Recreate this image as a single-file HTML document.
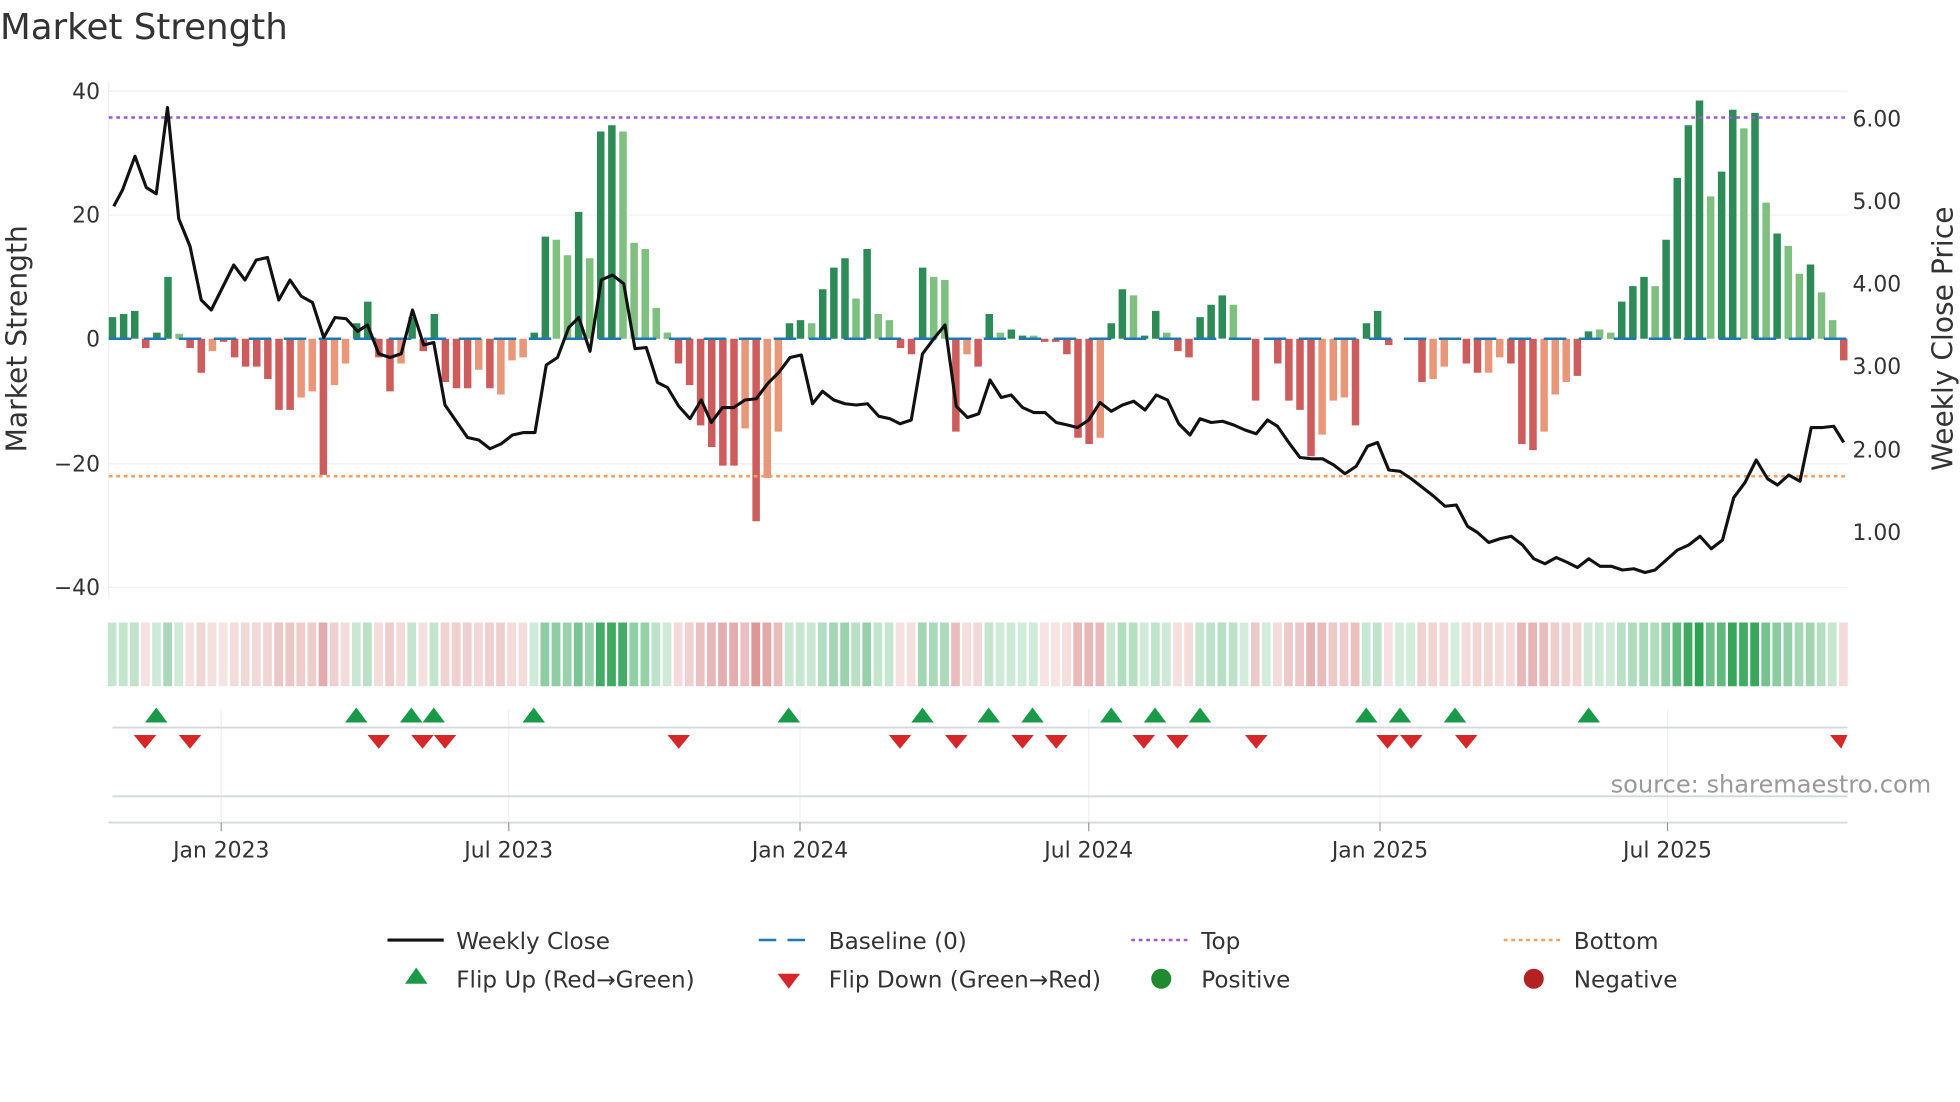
<!DOCTYPE html>
<html><head><meta charset="utf-8"><style>
html,body{margin:0;padding:0;background:#fff;width:1960px;height:1102px;overflow:hidden}
svg{display:block}
text{font-family:"DejaVu Sans","Liberation Sans",sans-serif;fill:#333}
</style></head><body>
<svg id="s" width="1960" height="1102" viewBox="0 0 1568 881.6" xmlns="http://www.w3.org/2000/svg">
<text x="0" y="31" font-size="28.5" fill="#333">Market Strength</text>
<g stroke="#eef0f3" stroke-width="1">
<line x1="87" x2="1478" y1="73" y2="73"/><line x1="87" x2="1478" y1="172" y2="172"/>
<line x1="87" x2="1478" y1="371" y2="371"/><line x1="87" x2="1478" y1="470" y2="470"/>
</g>
<line x1="87" x2="87" y1="65" y2="478" stroke="#eef0f3"/>
<g font-size="17.5" text-anchor="end">
<text x="80" y="79">40</text><text x="80" y="178">20</text><text x="80" y="277">0</text>
<text x="80" y="377">−20</text><text x="80" y="476">−40</text>
</g>
<g font-size="17.5">
<text x="1482" y="101">6.00</text><text x="1482" y="167">5.00</text><text x="1482" y="233">4.00</text>
<text x="1482" y="299">3.00</text><text x="1482" y="366">2.00</text><text x="1482" y="432">1.00</text>
</g>
<text transform="translate(21,271) rotate(-90)" font-size="22.5" text-anchor="middle">Market Strength</text>
<text transform="translate(1562,271) rotate(-90)" font-size="22.5" text-anchor="middle">Weekly Close Price</text>
<g id="bars"></g>
<line x1="87" x2="1478" y1="271" y2="271" stroke="#1f77b4" stroke-width="2" stroke-dasharray="18,10"/>
<line x1="87" x2="1478" y1="94" y2="94" stroke="#9b59d6" stroke-width="2" stroke-dasharray="3,3"/>
<line x1="87" x2="1478" y1="381" y2="381" stroke="#f0a060" stroke-width="2" stroke-dasharray="3,3"/>
<polyline id="price" fill="none" stroke="#111" stroke-width="2.5" stroke-linejoin="round"/>
<g id="heat"></g>
<g stroke="#eef0f3"><line x1="177" x2="177" y1="567" y2="658"/><line x1="407" x2="407" y1="567" y2="658"/><line x1="640" x2="640" y1="567" y2="658"/><line x1="871" x2="871" y1="567" y2="658"/><line x1="1104" x2="1104" y1="567" y2="658"/><line x1="1334" x2="1334" y1="567" y2="658"/></g>
<line x1="90" x2="1478" y1="582" y2="582" stroke="#d5d8dd" stroke-width="1.5"/>
<line x1="90" x2="1478" y1="637" y2="637" stroke="#d5d8dd" stroke-width="1.5"/>
<line x1="87" x2="1478" y1="658" y2="658" stroke="#d5d8dd" stroke-width="1.5"/>
<g id="tri"></g>
<text x="1545" y="634" font-size="19.3" text-anchor="end" style="fill:#999">source: sharemaestro.com</text>
<g stroke="#999"><line x1="177" x2="177" y1="658" y2="665"/><line x1="407" x2="407" y1="658" y2="665"/><line x1="640" x2="640" y1="658" y2="665"/><line x1="871" x2="871" y1="658" y2="665"/><line x1="1104" x2="1104" y1="658" y2="665"/><line x1="1334" x2="1334" y1="658" y2="665"/></g>
<g font-size="17.5" text-anchor="middle">
<text x="177" y="686">Jan 2023</text><text x="407" y="686">Jul 2023</text><text x="640" y="686">Jan 2024</text>
<text x="871" y="686">Jul 2024</text><text x="1104" y="686">Jan 2025</text><text x="1334" y="686">Jul 2025</text>
</g>
<g font-size="18.5">
<line x1="310" x2="355" y1="752" y2="752" stroke="#111" stroke-width="2.5"/><text x="365" y="759">Weekly Close</text>
<line x1="607" x2="652" y1="752" y2="752" stroke="#1f77b4" stroke-width="2" stroke-dasharray="14,9"/><text x="663" y="759">Baseline (0)</text>
<line x1="905" x2="950" y1="752" y2="752" stroke="#9b59d6" stroke-width="2" stroke-dasharray="3,3"/><text x="961" y="759">Top</text>
<line x1="1203" x2="1248" y1="752" y2="752" stroke="#f0a060" stroke-width="2" stroke-dasharray="3,3"/><text x="1259" y="759">Bottom</text>
<polygon points="324,787 342,787 333,774" fill="#1a9a48"/><text x="365" y="790">Flip Up (Red→Green)</text>
<polygon points="622,779 640,779 631,791" fill="#d62728"/><text x="663" y="790">Flip Down (Green→Red)</text>
<circle cx="929" cy="783" r="8" fill="#1f8a2e"/><text x="961" y="790">Positive</text>
<circle cx="1227" cy="783" r="8" fill="#b22222"/><text x="1259" y="790">Negative</text>
</g>
</svg>
<script>
var B=[[3.5],[4],[4.5],[-1.5],[1],[10],[0.8,1],[-1.5],[-5.5],[-2,1],[-0.5],[-3],[-4.5],[-4.5],[-6.5],[-11.5],[-11.5],[-9.5,1],[-8.5,1],[-22],[-7.5,1],[-4,1],[2.5],[6],[-3],[-8.5],[-4,1],[3.5],[-2],[4],[-7],[-8],[-8],[-5,1],[-8],[-9,1],[-3.5,1],[-3,1],[1],[16.5],[16,1],[13.5,1],[20.5],[13,1],[33.5],[34.5],[33.5,1],[15.5,1],[14.5,1],[5,1],[1,1],[-4],[-7.5],[-14],[-17.5],[-20.5],[-20.5],[-14.5,1],[-29.5],[-22.5,1],[-15,1],[2.5],[3],[2.5,1],[8],[11.5],[13],[6.5,1],[14.5],[4,1],[3,1],[-1.5],[-2.5],[11.5],[10,1],[9.5,1],[-15],[-2.5,1],[-4.5],[4],[1,1],[1.5],[0.5],[0.5,1],[-0.5],[-0.5],[-2.5],[-16],[-17],[-16,1],[2.5],[8],[7,1],[0.5],[4.5],[1,1],[-2],[-3],[3.5],[5.5],[7],[5.5,1],[0],[-10],[0],[-4],[-10],[-11.5],[-19],[-15.5,1],[-10,1],[-9.5,1],[-14],[2.5],[4.5],[-1],[0],[0],[-7],[-6.5,1],[-4.5,1],[0],[-4],[-5.5],[-5.5,1],[-3,1],[-4],[-17],[-18],[-15,1],[-9,1],[-7,1],[-6],[1.2],[1.5,1],[1,1],[6],[8.5],[10],[8.5,1],[16],[26],[34.5],[38.5],[23,1],[27],[37],[34,1],[36.5],[22,1],[17],[15,1],[10.5,1],[12],[7.5,1],[3,1],[-3.5]];
var n=B.length,x0=90,dx=(1475-90)/(n-1),h='',ht='';
B.forEach(function(b,i){var v=b[0],l=b[1],x=x0+i*dx;
 var c=v>=0?(l?'#7fbf7f':'#2e8b57'):(l?'#e9977a':'#cd5c5c');
 var y=271-v*4.95;h+='<rect x="'+(x-3).toFixed(1)+'" y="'+Math.min(y,271).toFixed(1)+'" width="6" height="'+Math.abs(v*4.95).toFixed(1)+'" fill="'+c+'"/>';
 var a=Math.min(1,0.2+Math.abs(v)/40*0.8);
 var hc=v>=0?'rgba(40,160,80,'+a.toFixed(2)+')':'rgba(200,90,90,'+(a*0.8).toFixed(2)+')';
 ht+='<rect x="'+(x-3.8).toFixed(1)+'" y="498" width="7" height="51" fill="'+hc+'"/>';});
document.getElementById('bars').innerHTML=h;document.getElementById('heat').innerHTML=ht;
var P=[[91,165],[98,152],[108,125],[117,150],[125,155],[134,86],[143,175],[152,197],[161,240],[169,248],[178,230],[187,212],[196,224],[205,208],[214,206],[223,240],[232,224],[241,237],[250,242],[259,270],[268,254],[277,255],[286,265],[294,260],[303,283],[312,286],[321,283],[330,248],[339,276],[347,274],[356,324],[365,337],[374,350],[383,352],[392,359],[401,355],[410,348],[419,346],[428,346],[437,292],[446,286],[455,262],[463,254],[472,281],[481,224],[490,220],[499,227],[508,279],[517,278],[526,306],[534,310],[543,325],[552,335],[561,320],[569,338],[578,326],[587,326],[596,320],[605,319],[614,307],[623,298],[632,286],[641,284],[650,323],[658,313],[667,320],[676,323],[685,324],[694,323],[703,333],[712,335],[720,339],[729,336],[738,283],[747,271],[756,260],[765,325],[774,334],[783,331],[792,304],[801,318],[809,316],[818,326],[827,330],[836,330],[845,338],[854,340],[862,342],[871,336],[880,322],[889,329],[898,324],[907,321],[916,328],[925,316],[934,320],[943,339],[952,348],[960,335],[969,338],[978,337],[987,340],[996,344],[1005,347],[1014,336],[1022,341],[1031,354],[1040,366],[1049,367],[1058,367],[1067,372],[1076,379],[1085,373],[1094,357],[1102,354],[1111,376],[1120,377],[1129,383],[1138,390],[1147,397],[1156,405],[1165,404],[1174,421],[1182,426],[1191,434],[1200,431],[1209,429],[1218,436],[1227,447],[1236,451],[1245,446],[1254,450],[1262,454],[1271,447],[1280,453],[1289,453],[1298,456],[1307,455],[1316,458],[1324,456],[1333,448],[1342,440],[1351,436],[1360,429],[1369,439],[1378,432],[1387,398],[1396,386],[1405,368],[1414,383],[1422,388],[1431,380],[1440,385],[1449,342],[1458,342],[1467,341],[1475,354]];
document.getElementById('price').setAttribute('points',P.map(function(p){return p.join(',')}).join(' '));
var U=[125,285,329,347,427,631,738,791,826,889,924,960,1093,1120,1164,1271],D=[116,152,303,338,356,543,720,765,818,845,915,942,1005,1110,1129,1173,1473],t='';
U.forEach(function(x){t+='<polygon points="'+(x-9)+',578 '+(x+9)+',578 '+x+',566" fill="#1a9a48"/>'});
D.forEach(function(x){var r=Math.min(x+9,1478);t+='<polygon points="'+(x-9)+',588 '+r+',588 '+x+',599" fill="#d62728"/>'});
document.getElementById('tri').innerHTML=t;
</script>
</body></html>
